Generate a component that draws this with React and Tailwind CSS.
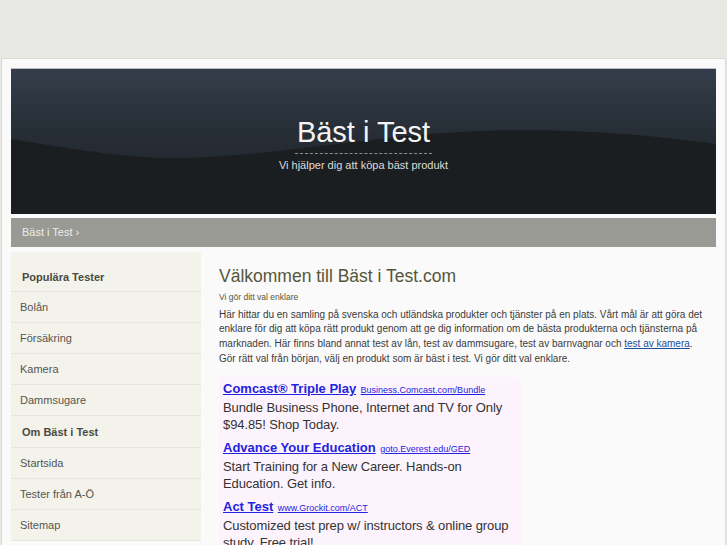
const sidebar = [
  { type: "h", label: "Populära Tester" },
  { label: "Bolån" },
  { label: "Försäkring" },
  { label: "Kamera" },
  { label: "Dammsugare" },
  { type: "h", label: "Om Bäst i Test" },
  { label: "Startsida" },
  { label: "Tester från A-Ö" },
  { label: "Sitemap" },
];

const ads = [
  {
    title: "Comcast® Triple Play",
    url: "Business.Comcast.com/Bundle",
    text: "Bundle Business Phone, Internet and TV for Only $94.85! Shop Today.",
  },
  {
    title: "Advance Your Education",
    url: "goto.Everest.edu/GED",
    text: "Start Training for a New Career. Hands-on Education. Get info.",
  },
  {
    title: "Act Test",
    url: "www.Grockit.com/ACT",
    text: "Customized test prep w/ instructors & online group study. Free trial!",
  },
];

const HeaderWave = () => (
  <svg className="absolute inset-0 h-full w-full" viewBox="0 0 705 145" preserveAspectRatio="none">
    <defs>
      <linearGradient id="sky" x1="0" y1="0" x2="0" y2="1">
        <stop offset="0" stopColor="#343e4a" />
        <stop offset="0.45" stopColor="#262d35" />
        <stop offset="1" stopColor="#1f2429" />
      </linearGradient>
    </defs>
    <rect width="705" height="145" fill="url(#sky)" />
    <path d="M0 70 C60 80 120 90 170 89 C260 88 360 66 470 62 C560 59 640 66 705 75 L705 145 L0 145 Z" fill="#1b1e21" />
  </svg>
);

export default function App() {
  return (
    <div className="min-h-[545px] bg-[#e8e8e4] pt-[58px] font-['Liberation_Sans',Arial,sans-serif]">
      <div className="mx-[1px] border border-[#dcdcd6] bg-[#fafafa] px-[9px] pt-[9px]">
        <header className="relative h-[146px] overflow-hidden border-t border-[#b8bcc0]">
          <HeaderWave />
          <div className="relative flex flex-col items-center pt-[47px]">
            <h1 className="text-[29px] leading-[32px] text-[#f4f4f4]">Bäst i Test</h1>
            <div className="mt-[5px] w-[137px] border-t border-dashed border-[#8a8e92]" />
            <p className="mt-[3px] text-[11px] text-[#dcdcdc]">Vi hjälper dig att köpa bäst produkt</p>
          </div>
        </header>

        <nav className="mt-[4px] flex h-[29px] items-center bg-[#9a9a95] px-[11px] text-[11px] text-[#ecece6]">
          Bäst i Test ›
        </nav>

        <div className="mt-[5px] flex">
          <aside className="w-[190px] shrink-0 self-start bg-[#f3f3ec] text-[11px] text-[#555550]">
            {sidebar.map((item, i) =>
              item.type === "h" ? (
                <div
                  key={i}
                  className={`border-b border-[#e6e6de] px-[11px] font-bold leading-[16px] text-[#4a4a40] ${i === 0 ? "pb-[6px] pt-[17px]" : "pb-[7px] pt-[8px]"}`}
                >
                  {item.label}
                </div>
              ) : (
                <div key={i} className="border-b border-[#e6e6de] px-[9px] py-[7px] leading-[16px]">
                  {item.label}
                </div>
              )
            )}
          </aside>

          <main className="min-w-0 flex-1 pl-[18px] pr-[10px] pt-[13px]">
            <h2 className="text-[17.5px] leading-[22px] text-[#56563a]">Välkommen till Bäst i Test.com</h2>
            <p className="mt-[4px] text-[8.5px] text-[#56563a]">Vi gör ditt val enklare</p>
            <p className="mt-[4px] text-[10px] leading-[14.6px] text-[#3a3a3a]">
              Här hittar du en samling på svenska och utländska produkter och tjänster på en plats. Vårt mål är att göra det
              enklare för dig att köpa rätt produkt genom att ge dig information om de bästa produkterna och tjänsterna på
              marknaden. Här finns bland annat test av lån, test av dammsugare, test av barnvagnar och{" "}
              <a href="#" className="text-[#1f4e9a] underline">test av kamera</a>. Gör rätt val från början, välj en
              produkt som är bäst i test. Vi gör ditt val enklare.
            </p>

            <div className="mt-[11px] w-[302px] rounded-[3px] bg-[#fdf3fd] pl-[4px] pr-[1px] pt-[2px]">
              {ads.map((ad) => (
                <div key={ad.title} className="pb-[5px]">
                  <div className="leading-[18px]">
                    <a href="#" className="text-[13px] font-bold text-[#2323dd] underline">{ad.title}</a>{" "}
                    <a href="#" className="text-[9px] text-[#2323dd] underline">{ad.url}</a>
                  </div>
                  <p className="text-[13px] leading-[17px] tracking-[-0.1px] text-[#333]">{ad.text}</p>
                </div>
              ))}
            </div>
          </main>
        </div>
      </div>
    </div>
  );
}
